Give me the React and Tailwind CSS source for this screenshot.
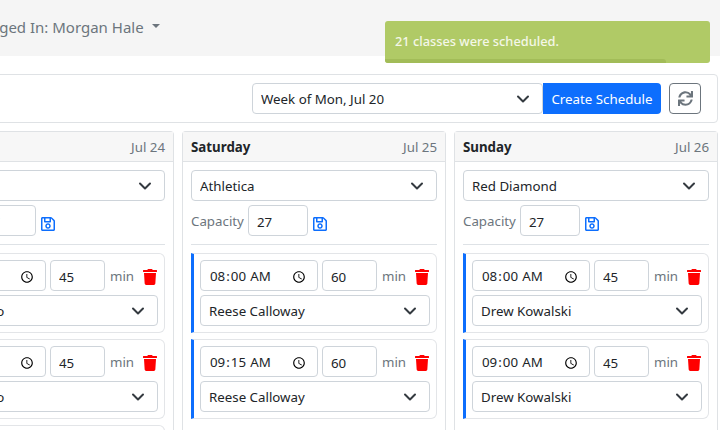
import { FaRegSave, FaSync, FaTrash } from "react-icons/fa";

const days = [
  {
    name: "Friday",
    date: "Jul 24",
    venue: "Athletica",
    classes: [
      { time: "08:00", duration: 45, teacher: "Max Russo" },
      { time: "09:00", duration: 45, teacher: "Max Russo" },
      { time: "10:00", duration: 45, teacher: "Max Russo" },
    ],
  },
  {
    name: "Saturday",
    date: "Jul 25",
    venue: "Athletica",
    classes: [
      { time: "08:00", duration: 60, teacher: "Reese Calloway" },
      { time: "09:15", duration: 60, teacher: "Reese Calloway" },
    ],
  },
  {
    name: "Sunday",
    date: "Jul 26",
    venue: "Red Diamond",
    classes: [
      { time: "08:00", duration: 45, teacher: "Drew Kowalski" },
      { time: "09:00", duration: 45, teacher: "Drew Kowalski" },
    ],
  },
];

const fieldClass =
  "h-[31px] rounded-[4px] border border-[#ced4da] bg-white px-2 pt-[4px] text-[#212529] outline-none";

function SelectField({ value, className = "" }) {
  return (
    <div className={`relative ${className}`}>
      <select
        defaultValue={value}
        className={`${fieldClass} w-full appearance-none`}
      >
        <option>{value}</option>
      </select>
      <svg
        viewBox="0 0 16 16"
        className="pointer-events-none absolute right-3 top-[8px] h-[16px] w-[16px]"
        fill="none"
        stroke="#343a40"
        strokeWidth="2"
        strokeLinecap="round"
        strokeLinejoin="round"
      >
        <path d="m3 5.5 5 5 5-5" />
      </svg>
    </div>
  );
}

function ClassCard({ item, first }) {
  return (
    <div
      className={`rounded-r-[6px] border border-l-[3px] border-[#e3e5e8] border-l-[#0d6efd] p-[6px] ${first ? "" : "mt-[6px]"}`}
    >
      <div className="flex items-center">
        <input
          type="time"
          defaultValue={item.time}
          className={`${fieldClass} w-[118px]`}
        />
        <input
          type="number"
          defaultValue={item.duration}
          className={`${fieldClass} ml-1 w-[55px] appearance-none`}
        />
        <span className="ml-[5px] pt-[4px] text-[#6c757d]">min</span>
        <FaTrash className="ml-auto mt-[4px] text-[16px] text-[#ff0000]" />
      </div>
      <SelectField value={item.teacher} className="mt-1" />
    </div>
  );
}

function DayColumn({ day }) {
  return (
    <div className="w-[264px] shrink-0 rounded-t-[4px] border border-b-0 border-[#dfe2e5]">
      <div className="flex h-[29.7px] items-center justify-between border-b border-[#dfe2e5] bg-[#f7f7f7] px-2 pt-[4px]">
        <span className="font-bold text-[#212529]">{day.name}</span>
        <span className="text-[#6c757d]">{day.date}</span>
      </div>
      <div className="p-2">
        <SelectField value={day.venue} />
        <div className="mt-1 flex items-center border-b border-[#dee2e6] pb-2">
          <span className="w-[57px] pt-[4px] text-[#6c757d]">Capacity</span>
          <input
            type="number"
            defaultValue={27}
            className={`${fieldClass} w-[60px]`}
          />
          <FaRegSave className="ml-1 mt-[7px] text-[16px] text-[#0d6efd]" />
        </div>
        <div className="mt-2">
          {day.classes.map((item, i) => (
            <ClassCard key={i} item={item} first={i === 0} />
          ))}
        </div>
      </div>
    </div>
  );
}

export default function App() {
  return (
    <div className="relative h-[430px] w-[720px] overflow-hidden bg-white text-[13.3px] [font-family:'Noto_Sans',sans-serif]">
      <div className="ml-[-90px] w-[810px]">
        <div className="flex h-[56px] items-center bg-[#f5f5f5] pb-[1px] pl-[63px] text-[15px] text-[#6c757d]">
          <span>Logged In: Morgan Hale</span>
          <span className="mb-[3px] ml-[8px] h-0 w-0 border-x-[4.5px] border-t-[4.5px] border-x-transparent border-t-[#6c757d]" />
        </div>

        <div className="mr-[2px] mt-[18px] flex h-[48.5px] items-center justify-end rounded-[4px] border border-[#dfe2e5] pr-4">
          <SelectField value="Week of Mon, Jul 20" className="w-[291px]" />
          <button className="h-[31px] w-[118px] rounded-r-[4px] bg-[#0d6efd] pt-[4px] text-white">
            Create Schedule
          </button>
          <button className="ml-2 flex h-[31px] w-[32px] items-center justify-center rounded-[4px] border border-[#6c757d] text-[#6c757d]">
            <FaSync className="text-[15px]" />
          </button>
        </div>

        <div className="mr-[2px] mt-[8.5px] flex gap-2">
          {days.map((day) => (
            <DayColumn key={day.name} day={day} />
          ))}
        </div>
      </div>

      <div className="absolute left-[385px] top-[21px] h-[42px] w-[325px] overflow-hidden rounded-[3px] bg-[#b0ca66] pl-[10px] pt-[11px] text-[12.8px] font-medium text-[#f4f7e8]">
        21 classes were scheduled.
        <div className="absolute bottom-0 left-0 h-[4px] w-[281px] rounded-tr-[3px] bg-[#a2bc58]" />
      </div>
    </div>
  );
}
